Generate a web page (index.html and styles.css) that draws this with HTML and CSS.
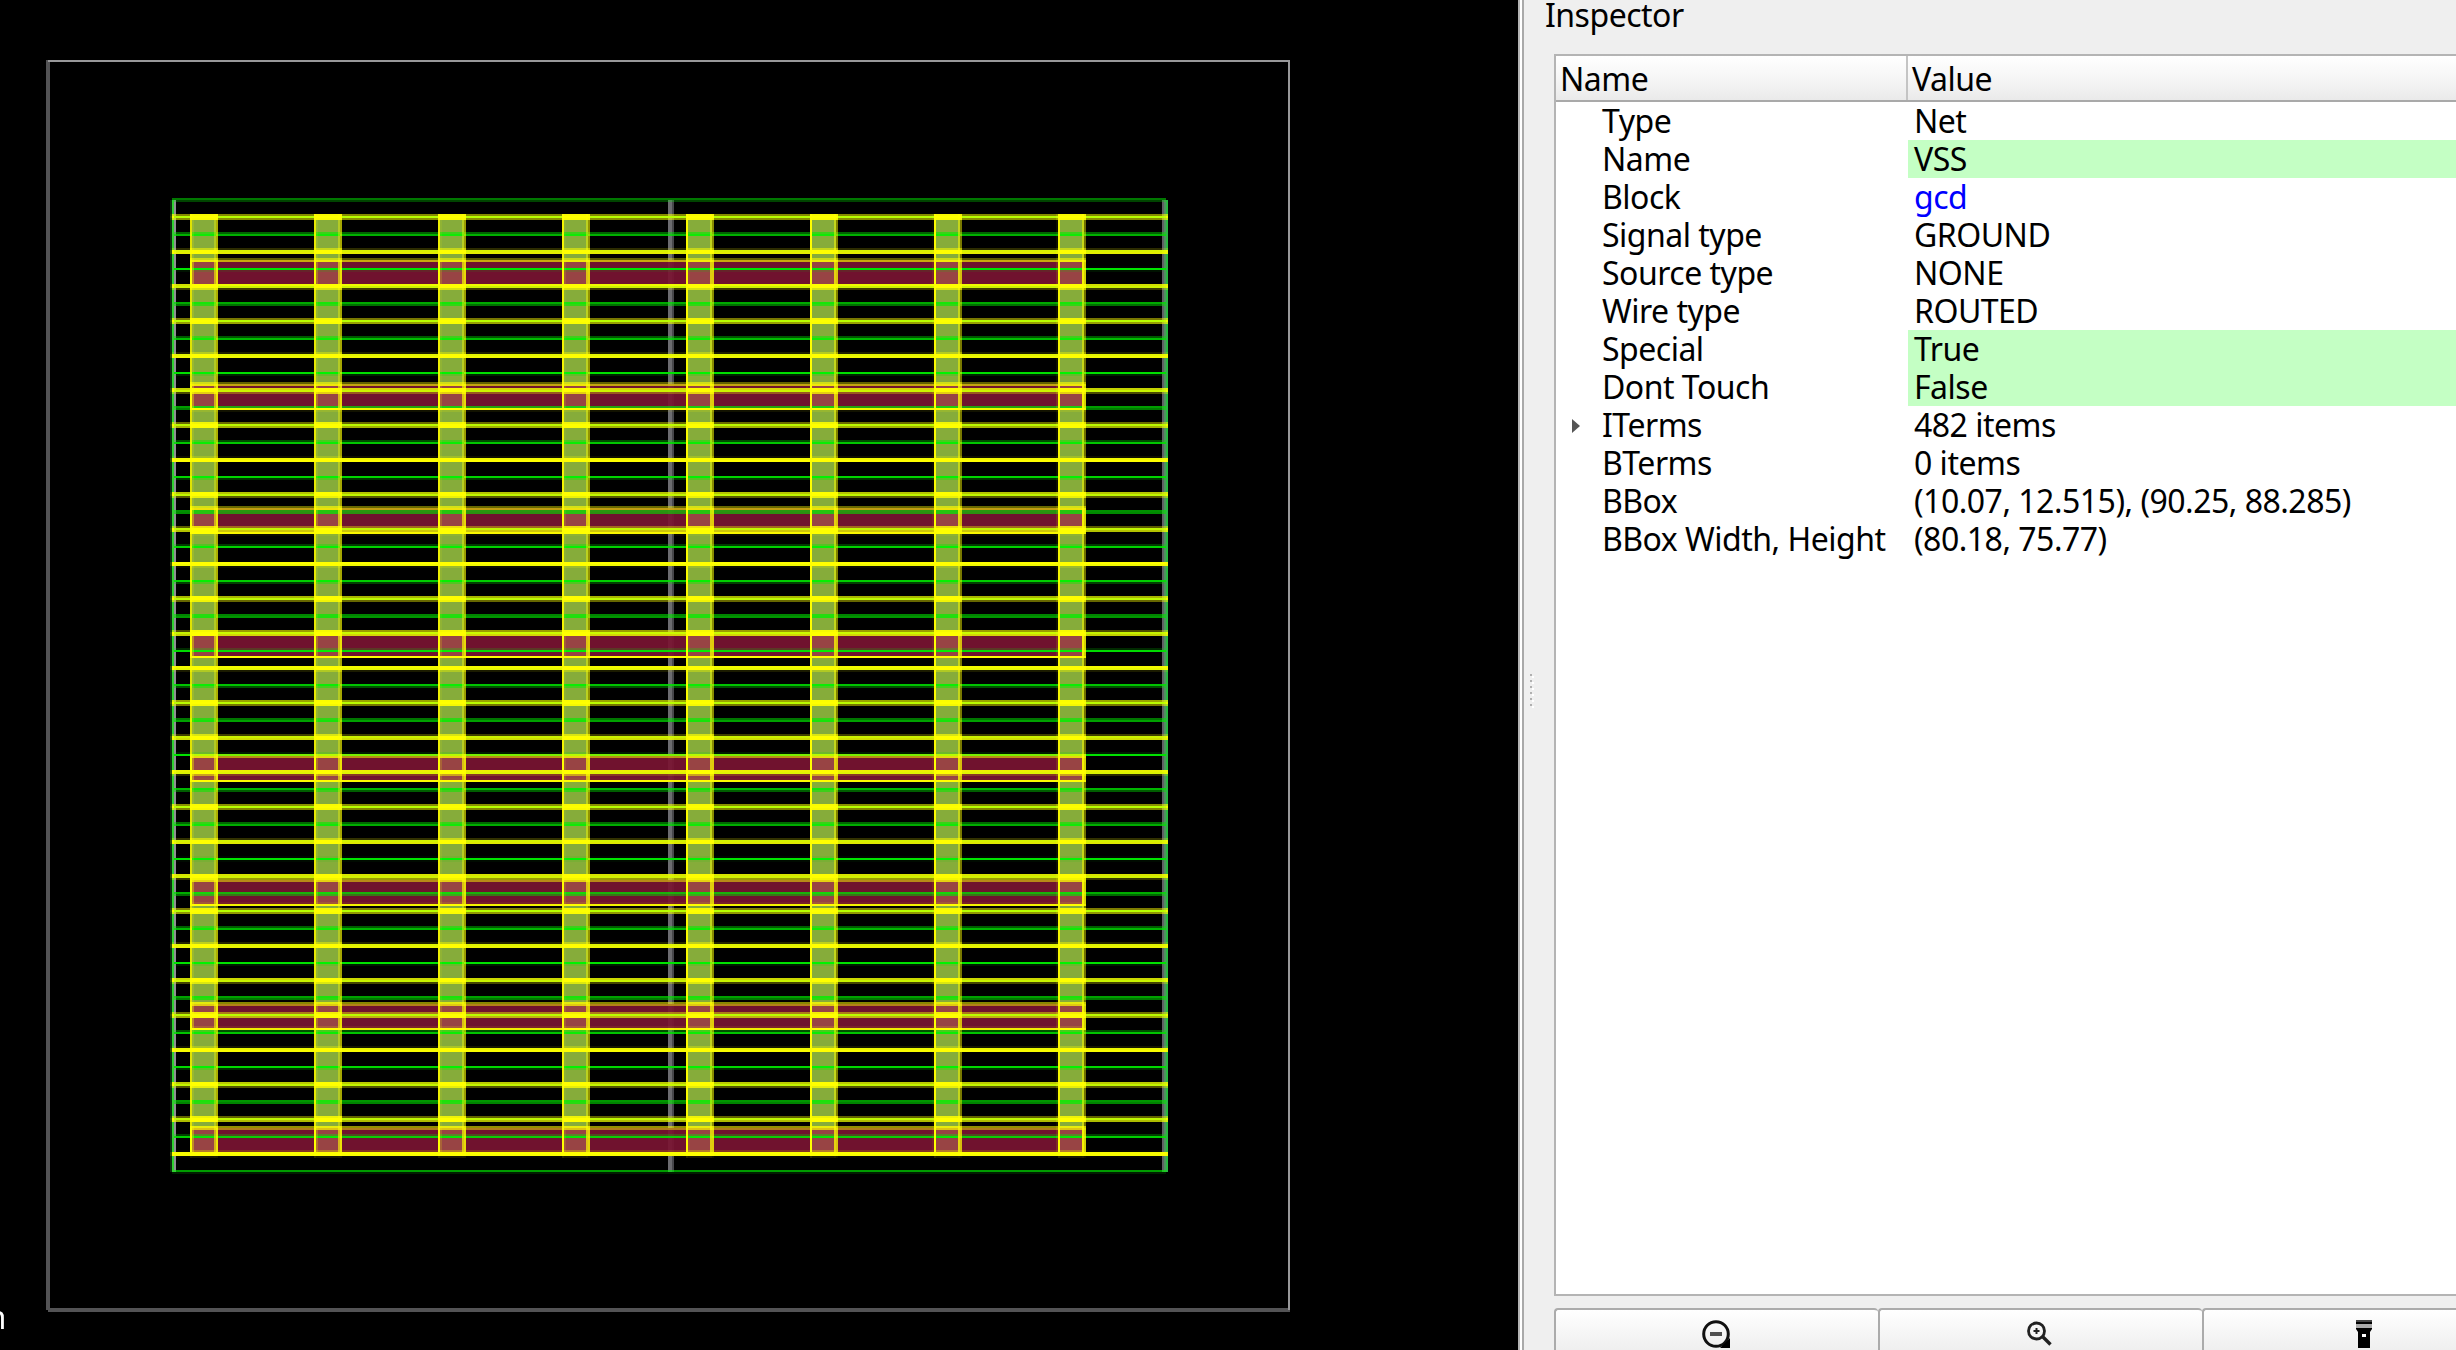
FILE: index.html
```
<!DOCTYPE html>
<html lang="en">
<head>
<meta charset="utf-8">
<title>Layout viewer</title>
<link rel="stylesheet" href="styles.css">
</head>
<body>
<main class="window">
  <section class="viewport"><canvas class="layout" id="layout" width="759" height="675"></canvas><span class="scale-unit">m</span></section>
  <div class="splitter"><div class="grip"><i></i><i></i><i></i><i></i><i></i><i></i></div></div>
  <aside class="inspector">
    <h1 class="title">Inspector</h1>
    <div class="tree">
      <div class="row head"><div class="name">Name</div><div class="value">Value</div></div>
      <div class="row"><div class="name">Type</div><div class="value">Net</div></div>
      <div class="row"><div class="name">Name</div><div class="value editable">VSS</div></div>
      <div class="row"><div class="name">Block</div><div class="value link">gcd</div></div>
      <div class="row"><div class="name">Signal type</div><div class="value">GROUND</div></div>
      <div class="row"><div class="name">Source type</div><div class="value">NONE</div></div>
      <div class="row"><div class="name">Wire type</div><div class="value">ROUTED</div></div>
      <div class="row"><div class="name">Special</div><div class="value editable">True</div></div>
      <div class="row"><div class="name">Dont Touch</div><div class="value editable">False</div></div>
      <div class="row"><div class="name expandable">ITerms</div><div class="value">482 items</div></div>
      <div class="row"><div class="name">BTerms</div><div class="value">0 items</div></div>
      <div class="row"><div class="name">BBox</div><div class="value">(10.07, 12.515), (90.25, 88.285)</div></div>
      <div class="row"><div class="name">BBox Width, Height</div><div class="value">(80.18, 75.77)</div></div>
    </div>
    <div class="actions">
      <button class="action"><svg width="32" height="32" viewBox="0 0 32 32"><circle cx="15" cy="16" r="12.3" fill="none" stroke="#111" stroke-width="3"/><path d="M9 16h12" stroke="#505050" stroke-width="4"/><path d="M19 30h10V20z"/></svg></button>
      <button class="action"><svg width="32" height="32" viewBox="0 0 32 32"><circle cx="11.5" cy="13" r="8" fill="none" stroke="#222" stroke-width="2.8"/><path d="M8.5 13h6M11.5 10v6" stroke="#222" stroke-width="2"/><path d="M17.5 18.5l8 8" stroke="#222" stroke-width="3.4"/></svg></button>
      <button class="action"><svg width="32" height="32" viewBox="0 0 32 32"><path d="M7 2h16v9l-2 3v16H9V14l-2-3z"/><path d="M7 2h16v2H7z" fill="#444"/><path d="M7 6h16v4H7z" fill="#aaa"/><path d="M13 16h4v3h-4z" fill="#fff"/></svg></button>
    </div>
  </aside>
</main>
<script src="layout.js"></script>
</body>
</html>
```
FILE: styles.css
```
* { box-sizing: border-box; }
body { margin: 0; background: #efefef; color: #000; font-family: "Noto Sans", "Open Sans", sans-serif; font-size: 32px; letter-spacing: -0.5px; overflow: hidden; }
.window { display: flex; width: 2456px; height: 1350px; overflow: hidden; }
.viewport { position: relative; flex: 0 0 1518px; background: #000; overflow: hidden; }
.layout { display: block; width: 1518px; height: 1350px; image-rendering: pixelated; }
.scale-unit { position: absolute; right: 1512px; top: 1295px; color: #fff; line-height: 44px; }
.splitter { flex: 0 0 36px; padding: 674px 0 0 10px; border-left: 2px solid #b4b4b4; background: linear-gradient(90deg, #fff 2px, #a9a9a9 2px 4px, #efefef 4px); }
.grip { display: grid; gap: 4px; }
.grip i { width: 2px; height: 2px; background: #b0b0b0; box-shadow: 2px 2px #fff; }
.inspector { flex: 1; min-width: 0; display: flex; flex-direction: column; }
.title { flex: 0 0 54px; margin: 0 0 0 -9px; font-size: 32px; font-weight: 400; line-height: 29px; white-space: nowrap; }
.tree { flex: 0 0 1242px; background: #fff; border: solid #b4b4b4; border-width: 2px 0 2px 2px; }
.row { display: flex; height: 38px; line-height: 38px; white-space: nowrap; }
.name { width: 352px; padding-left: 46px; position: relative; }
.value { flex: 1; padding-left: 6px; }
.head { height: 46px; line-height: 45px; background: linear-gradient(#fff, #f6f6f6 50%, #eaeaea); border-bottom: 2px solid #a9a9a9; }
.head .name { width: 352px; padding-left: 4px; border-right: 2px solid #c4c4c4; }
.head .value { padding-left: 4px; }
.editable { background: #c4ffc4; }
.link { color: #00f; }
.expandable::before { content: ""; position: absolute; left: 16px; top: 13px; border: solid transparent; border-width: 7px 0 7px 8px; border-left-color: #555; }
.actions { flex: none; display: flex; margin-top: 12px; height: 60px; width: 976px; }
.action { flex: 0 0 324px; padding: 8px 0 0; border: 2px solid #ababab; border-right-width: 0; border-radius: 4px 4px 0 0; background: linear-gradient(#fff, #eee 42px); display: flex; justify-content: center; align-items: flex-start; }
```
FILE: layout.js
```
const ctx = document.getElementById('layout').getContext('2d');
const SCALE = 6.197, LEFT = 24, BOTTOM = 655.08;
const px = um => LEFT + um * SCALE;
const py = um => BOTTOM - um * SCALE;
const fill = (x, y, w, h, color) => { ctx.fillStyle = color; ctx.fillRect(x, y, w, h); };
const line = (x0, y0, x1, y1) => fill(x0, y0, x1 - x0, y1 - y0, '#ff0');
// outline with a one pixel pen
const outline = (l, t, r, b) => {
  line(l - .5, t - .5, r + .5, t + .5);
  line(l - .5, b - .5, r + .5, b + .5);
  line(l - .5, t - .5, l + .5, b + .5);
  line(r - .5, t - .5, r + .5, b + .5);
};

const coreL = px(10.07), coreR = px(90.25);
const straps = Array.from({ length: 8 }, (_, i) => [95.65 + i * 61.97, 108.15 + i * 61.97]);
const bands = Array.from({ length: 8 }, (_, i) => [130.15 + i * 61.97, 142.6 + i * 61.97]);
const rails = Array.from({ length: 28 }, (_, i) => py(12.6 + 2.8 * i));

// die area
fill(23, 30, 2, 625, '#535355');
fill(24, 654, 621, 2, '#535355');
fill(24, 30, 621, 1, '#98989a');
fill(644, 30, 1, 625, '#98989a');

// tap cell columns
fill(334, 100, 2, 486, '#6c6c70'); fill(336, 100, 1, 486, '#48484c');
fill(85, 100, 1, 486, '#102c10'); fill(87, 100, 1, 486, '#909094');
fill(581, 100, 1, 486, '#606064'); fill(582, 100, 1, 486, '#509060');

bands.forEach(([t, b]) => fill(straps[0][0], t, straps[7][1] - straps[0][0], b - t, 'rgba(120,19,50,.93)'));
straps.forEach(([l, r]) => fill(l, rails[27], r - l, rails[0] - rails[27], '#86ac3a'));
bands.forEach(([t, b]) => straps.forEach(([l, r]) => fill(l, t, r - l, b - t, '#984444')));

// power rails of the other net
fill(86, 99.5, 497, .78, '#00f000');
fill(86, 585.35, 497, .78, '#00f000');
for (let i = 1; i < 28; i++) {
  const y = py(11.2 + 2.8 * i);
  fill(86, y - .55, 497, 1.08, '#00e600');
  fill(86, y - .55, 497, 1.08, 'rgba(0,230,0,.3)');
  straps.forEach(([l, r]) => fill(l, y - .55, r - l, 1.1, 'rgba(0,255,0,.6)'));
}
fill(86, 100, 1, 486, '#30d030');
fill(583, 100, 1, 486, '#28b840');

// highlighted net
bands.forEach(([t, b]) => outline(straps[0][0], t, straps[7][1], b));
straps.forEach(([l, r]) => outline(l, rails[27] - .5, r, rails[0] + .5));
bands.forEach(([t, b]) => straps.forEach(([l, r]) => outline(l, t, r, b)));
rails.forEach(y => {
  fill(coreL, y - .53, coreR - coreL, 1.06, '#0f0');
  outline(coreL, y - .53, coreR, y + .53);
  straps.forEach(([l, r]) => { for (let n = 0; n < 3; n++) outline(l, y - .53, r, y + .53); });
});
```
